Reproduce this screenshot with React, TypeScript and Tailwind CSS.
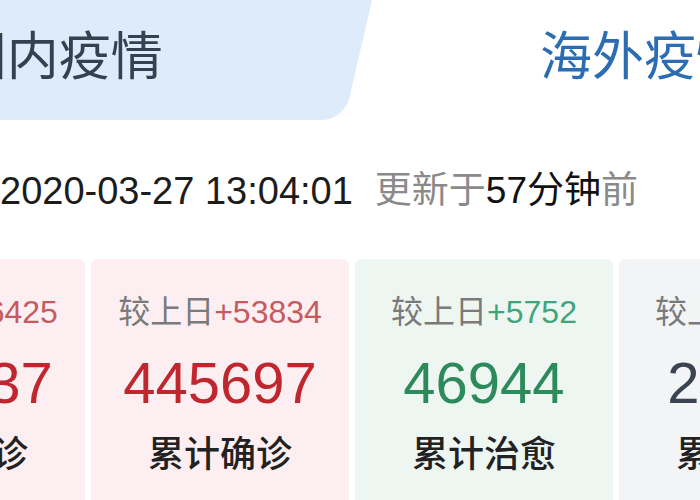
import React from 'react';

type Card = {
  bg: string;
  sub: string;
  subColor: string;
  num: string;
  numColor: string;
  label: string;
};

const cards: Card[] = [
  { bg: 'bg-[#fdeff1]', sub: '+46425', subColor: 'text-[#c65a61]', num: '377837', numColor: 'text-[#bf262e]', label: '现有确诊' },
  { bg: 'bg-[#fdeff1]', sub: '+53834', subColor: 'text-[#c65a61]', num: '445697', numColor: 'text-[#bf262e]', label: '累计确诊' },
  { bg: 'bg-[#eef6f2]', sub: '+5752', subColor: 'text-[#3ea57a]', num: '46944', numColor: 'text-[#2d8a5a]', label: '累计治愈' },
  { bg: 'bg-[#f2f4f6]', sub: '+1657', subColor: 'text-[#6b7280]', num: '20916', numColor: 'text-[#3c4350]', label: '累计死亡' },
];

export default function App() {
  return (
    <div className="w-[700px] h-[500px] overflow-hidden bg-white font-['Liberation_Sans','Noto_Sans_CJK_SC',sans-serif]">
      <div className="flex h-[120px]">
        <div className="shrink-0 w-[432px] ml-[-60px] h-full bg-[#deebfa] skew-x-[-13deg] origin-top-left rounded-br-[22px] flex items-center pl-[28px] pb-[6px]">
          <span className="skew-x-[13deg] text-[52px] text-[#34414f] leading-none whitespace-nowrap">国内疫情</span>
        </div>
        <div className="flex-1 flex items-center pl-[168px] pb-[6px] min-w-0">
          <span className="text-[52px] text-[#2b6cb3] leading-none whitespace-nowrap">海外疫情</span>
        </div>
      </div>

      <div className="mt-[48px] h-[46px] flex items-center text-[38px] whitespace-nowrap">
        <span className="text-[#1c1c1c]">2020-03-27 13:04:01</span>
        <span className="ml-[22px] text-[#8a8a8a] text-[37px]">更新于</span>
        <span className="text-[#111] text-[37px]">57分钟</span>
        <span className="text-[#8a8a8a] text-[37px]">前</span>
      </div>

      <div className="mt-[45px] flex gap-[6px] ml-[-173px]">
        {cards.map((c) => (
          <div key={c.label} className={`w-[258px] shrink-0 h-[260px] rounded-[6px] flex flex-col items-center pt-[33px] ${c.bg}`}>
            <div className="text-[32px] leading-[40px] whitespace-nowrap">
              <span className="text-[#7a7a7a]">较上日</span>
              <span className={c.subColor}>{c.sub}</span>
            </div>
            <div className={`mt-[19px] text-[58px] leading-[64px] ${c.numColor}`}>{c.num}</div>
            <div className="mt-[18px] text-[36px] leading-[44px] font-medium text-[#222] whitespace-nowrap">{c.label}</div>
          </div>
        ))}
      </div>
    </div>
  );
}
